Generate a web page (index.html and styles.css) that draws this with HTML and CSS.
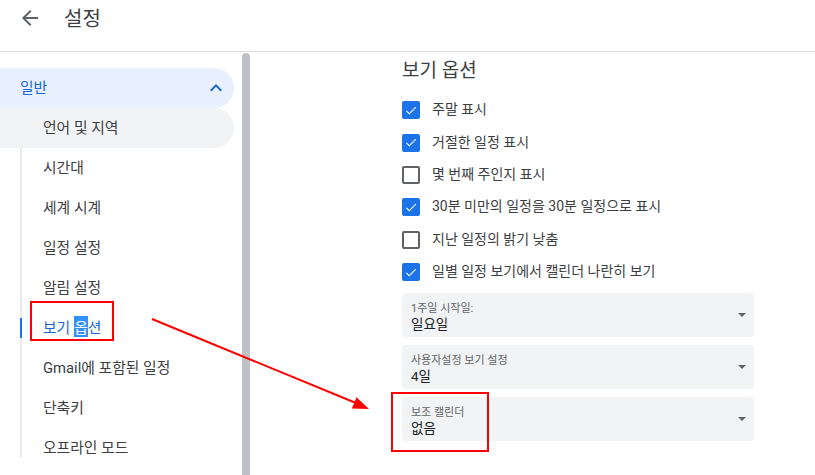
FILE: index.html
```html
<!DOCTYPE html>
<html lang="ko">
<head>
  <meta charset="UTF-8">
  <title>설정</title>
  <link rel="stylesheet" href="styles.css">
</head>
<body>
  <header class="topbar">
    <svg class="back" viewBox="0 0 24 24" width="24" height="24"><path d="M20 11H7.83l5.59-5.59L12 4l-8 8 8 8 1.41-1.41L7.83 13H20v-2z"/></svg>
    <h1>설정</h1>
  </header>

  <div class="layout">
    <nav class="sidebar">
      <div class="group-head">
        <span>일반</span>
        <svg viewBox="0 0 24 24" width="24" height="24"><path d="M12 8l-6 6 1.41 1.41L12 10.83l4.59 4.58L18 14z"/></svg>
      </div>
      <ul class="sub">
        <li class="hover">언어 및 지역</li>
        <li>시간대</li>
        <li>세계 시계</li>
        <li>일정 설정</li>
        <li>알림 설정</li>
        <li class="active">보기 <span class="sel">옵</span>션</li>
        <li>Gmail에 포함된 일정</li>
        <li>단축키</li>
        <li>오프라인 모드</li>
      </ul>
    </nav>
    <div class="scrollbar"></div>

    <main class="content">
      <h2>보기 옵션</h2>
      <div class="checks">
        <label class="check"><span class="box on"><svg viewBox="0 0 24 24"><path d="M9 16.17L4.83 12l-1.42 1.41L9 19 21 7l-1.41-1.41z"/></svg></span><span class="txt">주말 표시</span></label>
        <label class="check"><span class="box on"><svg viewBox="0 0 24 24"><path d="M9 16.17L4.83 12l-1.42 1.41L9 19 21 7l-1.41-1.41z"/></svg></span><span class="txt">거절한 일정 표시</span></label>
        <label class="check"><span class="box"></span><span class="txt">몇 번째 주인지 표시</span></label>
        <label class="check"><span class="box on"><svg viewBox="0 0 24 24"><path d="M9 16.17L4.83 12l-1.42 1.41L9 19 21 7l-1.41-1.41z"/></svg></span><span class="txt">30분 미만의 일정을 30분 일정으로 표시</span></label>
        <label class="check"><span class="box"></span><span class="txt">지난 일정의 밝기 낮춤</span></label>
        <label class="check"><span class="box on"><svg viewBox="0 0 24 24"><path d="M9 16.17L4.83 12l-1.42 1.41L9 19 21 7l-1.41-1.41z"/></svg></span><span class="txt">일별 일정 보기에서 캘린더 나란히 보기</span></label>
      </div>

      <div class="selects">
        <div class="select">
          <div class="sel-text"><div class="sel-label">1주일 시작일:</div><div class="sel-value">일요일</div></div>
          <span class="caret"></span>
        </div>
        <div class="select">
          <div class="sel-text"><div class="sel-label">사용자설정 보기 설정</div><div class="sel-value">4일</div></div>
          <span class="caret"></span>
        </div>
        <div class="select">
          <div class="sel-text"><div class="sel-label">보조 캘린더</div><div class="sel-value">없음</div></div>
          <span class="caret"></span>
        </div>
      </div>
    </main>
  </div>

  <!-- annotation overlay -->
  <svg class="marks" width="815" height="475" viewBox="0 0 815 475">
    <rect x="31" y="302" width="82" height="38" fill="none" stroke="#f00" stroke-width="2"/>
    <rect x="392" y="393" width="96" height="58" fill="none" stroke="#f00" stroke-width="2"/>
    <line x1="152" y1="319" x2="356" y2="403" stroke="#f00" stroke-width="2"/>
    <polygon points="369,409 351.9,408.5 356.5,397.3" fill="#f00"/>
  </svg>
</body>
</html>
```

FILE: styles.css
```css
body { margin: 0; font-family: Roboto, "Noto Sans CJK KR", sans-serif; color: #3c4043; background: #fff; width: 815px; height: 475px; overflow: hidden; position: relative; }

.topbar { height: 51px; border-bottom: 1px solid #dadce0; display: flex; align-items: center; padding-left: 18px; box-sizing: content-box; }
.topbar .back { fill: #5f6368; margin-top: -16px; }
.topbar h1 { margin: -16px 0 0 22px; font-size: 20px; font-weight: 400; color: #3c4043; }

.layout { display: grid; grid-template-columns: 242px 8px 1fr; height: 423px; }

.sidebar { padding-top: 16px; font-size: 14.8px; }
.group-head { width: 234px; height: 40px; box-sizing: border-box; display: flex; align-items: center; justify-content: space-between; padding: 0 6px 0 20px; background: #e8f0fe; border-radius: 0 20px 20px 0; color: #1967d2; }
.group-head span { padding-bottom: 3px; }
.group-head svg { fill: #1967d2; }

.sub { list-style: none; margin: 0; padding: 0; position: relative; }
.sub::before { content: ""; position: absolute; left: 20px; top: 10px; bottom: 11px; width: 2px; background: #e8eaed; }
.sub li { width: 234px; height: 40px; box-sizing: border-box; display: flex; align-items: center; padding: 0 0 3px 43px; border-radius: 0 20px 20px 0; position: relative; }
.sub li.hover { background: #f1f3f4; }
.sub li.active { color: #1967d2; }
.sub li.active::before { content: ""; position: absolute; left: 20px; top: 10px; width: 2px; height: 20px; background: #1a73e8; }
.sub .sel { background: #3390ff; color: #fff; margin-left: 4px; }

.scrollbar { background: #bdc1c6; border-radius: 4px 4px 0 0; margin-top: 1px; }

.content { padding: 7px 0 0 152px; }
.content h2 { margin: 0; font-size: 19px; font-weight: 400; line-height: 24px; color: #3c4043; }

.checks { margin-top: 11px; width: 352px; }
.check { height: 32.4px; display: flex; align-items: center; font-size: 14px; color: #3c4043; white-space: nowrap; }
.check .txt { padding-bottom: 4px; }
.box { width: 18px; height: 18px; box-sizing: border-box; border: 2px solid #5f6368; border-radius: 2px; margin-right: 12px; display: flex; align-items: center; justify-content: center; }
.box.on { background: #1a73e8; border-color: #1a73e8; }
.box svg { width: 15px; height: 15px; fill: #fff; }

.selects { margin-top: 5px; width: 352px; display: flex; flex-direction: column; gap: 8px; }
.select { height: 44px; box-sizing: border-box; background: #f1f3f4; border-radius: 4px; display: flex; align-items: center; padding: 0 8px 0 9px; }
.sel-text { flex: 1; padding-top: 3px; }
.sel-label { font-size: 11px; line-height: 15px; color: #5f6368; }
.sel-value { font-size: 13.5px; line-height: 17px; color: #202124; }
.caret { width: 0; height: 0; border-left: 4px solid transparent; border-right: 4px solid transparent; border-top: 4px solid #5f6368; }

.marks { position: absolute; left: 0; top: 0; pointer-events: none; }
```
